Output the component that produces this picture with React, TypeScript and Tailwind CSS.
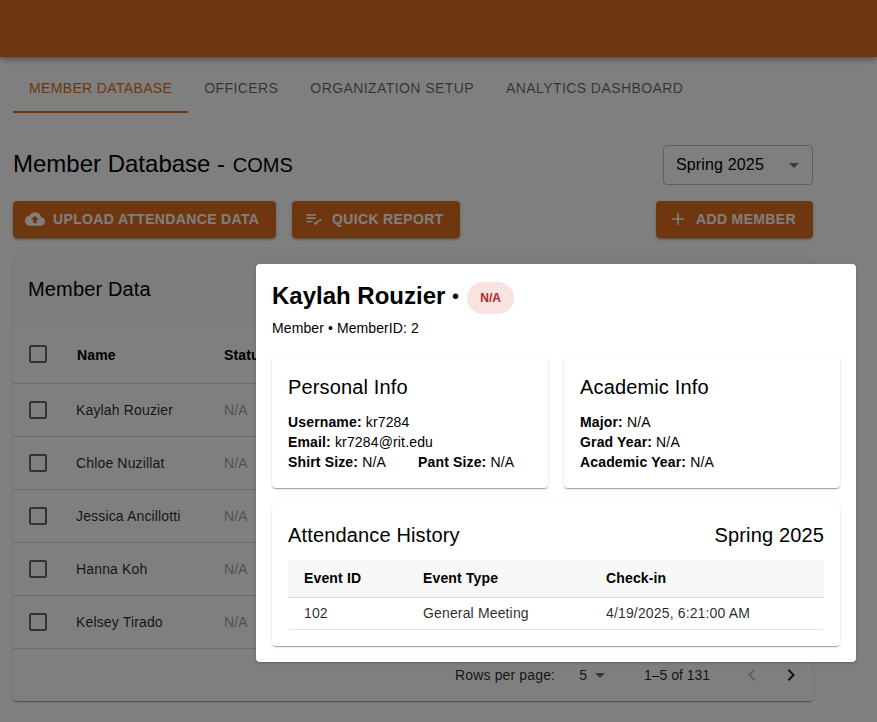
const members = ['Kaylah Rouzier', 'Chloe Nuzillat', 'Jessica Ancillotti', 'Hanna Koh', 'Kelsey Tirado'];
const tabs = ['Officers', 'Organization Setup', 'Analytics Dashboard'];

function Icon({ d, className }: { d: string; className: string }) {
  return (
    <svg viewBox="0 0 24 24" fill="currentColor" className={className}>
      <path d={d} />
    </svg>
  );
}

const checkbox = 'M19 5v14H5V5h14m0-2H5c-1.1 0-2 .9-2 2v14c0 1.1.9 2 2 2h14c1.1 0 2-.9 2-2V5c0-1.1-.9-2-2-2z';
const dropdown = 'M7 10l5 5 5-5z';
const btn =
  'flex h-[37px] items-center rounded bg-[#de6e20] pb-px pl-4 text-sm font-bold uppercase tracking-[0.35px] text-white shadow-[0_3px_1px_-2px_rgba(0,0,0,0.2),0_2px_2px_0_rgba(0,0,0,0.14),0_1px_5px_0_rgba(0,0,0,0.12)]';
const card = 'rounded bg-white shadow-[0_2px_1px_-1px_rgba(0,0,0,0.2),0_1px_1px_0_rgba(0,0,0,0.14),0_1px_3px_0_rgba(0,0,0,0.12)]';

function Field({ label, value }: { label: string; value: string }) {
  return (
    <span>
      <b className="font-bold">{label}:</b> {value}
    </span>
  );
}

export default function App() {
  return (
    <div className="relative h-[722px] overflow-hidden bg-white font-['Liberation_Sans',sans-serif] text-black">
      <div className="h-[57px] bg-[#de6e20] shadow-[0_2px_4px_-1px_rgba(0,0,0,0.2),0_4px_5px_0_rgba(0,0,0,0.14),0_1px_10px_0_rgba(0,0,0,0.12)]" />

      <nav className="ml-[13px] mt-[7px] flex h-[49px] text-sm uppercase tracking-[0.42px] text-black/60">
        <div className="flex items-center border-b-2 border-[#de6e20] px-4 pt-px tracking-[0.35px] text-[#de6e20]">Member Database</div>
        {tabs.map((t) => (
          <div key={t} className="flex items-center px-4 pb-px">
            {t}
          </div>
        ))}
      </nav>

      <main className="ml-[13px] w-[800px]">
        <div className="mt-[32px] flex h-[40px] items-center justify-between">
          <div className="flex items-baseline pb-[3px]">
            <h1 className="text-2xl">Member Database -&nbsp;</h1>
            <span className="ml-px text-xl">COMS</span>
          </div>
          <div className="flex h-[40px] w-[150px] items-center justify-between rounded border border-black/25 pl-3 pr-[6px] text-base tracking-[0.15px]">
            Spring 2025
            <Icon d={dropdown} className="size-6 text-black/55" />
          </div>
        </div>

        <div className="mt-4 flex">
          <button className={`${btn} w-[263px]`}>
            <Icon
              d="M19.35 10.04C18.67 6.59 15.64 4 12 4 9.11 4 6.6 5.64 5.35 8.04 2.34 8.36 0 10.91 0 14c0 3.31 2.69 6 6 6h13c2.76 0 5-2.24 5-5 0-2.64-2.05-4.78-4.65-4.96zM14 13v4h-4v-4H7l5-5 5 5h-3z"
              className="-ml-1 mr-2 size-5"
            />
            Upload Attendance Data
          </button>
          <button className={`${btn} ml-4 w-[168px]`}>
            <Icon
              d="M3 10h11v2H3zm0-2h11V6H3zm0 8h7v-2H3zm15.01-3.13.71-.71c.39-.39 1.02-.39 1.41 0l.71.71c.39.39.39 1.02 0 1.41l-.71.71zm-.71.71L12 16.88V19h2.12l5.3-5.3z"
              className="-ml-1 mr-2 size-5"
            />
            Quick Report
          </button>
          <button className={`${btn} ml-auto w-[157px]`}>
            <Icon d="M19 13h-6v6h-2v-6H5v-2h6V5h2v6h6v2z" className="-ml-1 mr-2 size-5" />
            Add Member
          </button>
        </div>

        <section className={`${card} mt-4 h-[447px]`}>
          <h2 className="flex h-[71px] items-center rounded-t bg-black/[0.02] px-[15px] pb-[2px] text-xl tracking-[0.15px]">
            Member Data
          </h2>
          <div className="flex h-[59px] items-center border-b border-black/15 text-sm font-bold tracking-[0.15px]">
            <Icon d={checkbox} className="ml-[13px] size-6 shrink-0 text-black/60" />
            <span className="ml-[27px] mt-[2px] w-[147px]">Name</span>
            <span className="mt-[2px]">Status</span>
          </div>
          {members.map((m) => (
            <div key={m} className="flex h-[53px] items-center border-b border-black/15 text-sm tracking-[0.15px]">
              <Icon d={checkbox} className="ml-[13px] size-6 shrink-0 text-black/60" />
              <span className="ml-[26px] w-[148px] text-black/85">{m}</span>
              <span className="text-black/40">N/A</span>
            </div>
          ))}
          <div className="flex h-[52px] items-center pb-[1px] pl-[442px] text-sm text-black/85">
            <span className="tracking-[0.15px]">Rows per page:</span>
            <span className="ml-[24px]">5</span>
            <Icon d={dropdown} className="ml-px size-6 text-black/55" />
            <span className="ml-[32px]">1–5 of 131</span>
            <Icon d="M15.41 7.41 14 6l-6 6 6 6 1.41-1.41L10.83 12z" className="ml-[30px] size-6 text-black/25" />
            <Icon d="M10 6 8.59 7.41 13.17 12l-4.58 4.59L10 18l6-6z" className="ml-[15px] size-6 text-black/85" />
          </div>
        </section>
      </main>

      {/* Modal over the page */}
      <div className="absolute inset-0 bg-black/50" />
      <div className="absolute left-[256px] top-[264px] h-[398px] w-[600px] rounded bg-white p-4 shadow-[0_1px_3px_rgba(0,0,0,0.25)]">
        <div className="flex h-8 items-center text-2xl font-bold">
          Kaylah Rouzier&nbsp;
          <span className="text-xl font-normal">•</span>
          <span className="ml-[8px] mt-[4px] flex h-8 w-[47px] items-center justify-center rounded-full bg-[#f8e3e1] text-xs text-[#b3261e]">
            N/A
          </span>
        </div>
        <p className="mt-[6px] h-5 text-sm leading-5 tracking-[0.1px]">Member • MemberID: 2</p>

        <div className="mt-[18px] flex gap-4">
          <div className={`${card} h-[132px] flex-1 px-4 pt-[16px]`}>
            <h3 className="text-xl leading-[30px] tracking-[0.15px]">Personal Info</h3>
            <div className="mt-[10px] flex flex-col text-sm leading-5 tracking-[0.15px]">
              <Field label="Username" value="kr7284" />
              <Field label="Email" value="kr7284@rit.edu" />
              <div className="flex">
                <span className="w-[130px]">
                  <Field label="Shirt Size" value="N/A" />
                </span>
                <Field label="Pant Size" value="N/A" />
              </div>
            </div>
          </div>
          <div className={`${card} h-[132px] flex-1 px-4 pt-[16px]`}>
            <h3 className="text-xl leading-[30px] tracking-[0.15px]">Academic Info</h3>
            <div className="mt-[10px] flex flex-col text-sm leading-5 tracking-[0.15px]">
              <Field label="Major" value="N/A" />
              <Field label="Grad Year" value="N/A" />
              <Field label="Academic Year" value="N/A" />
            </div>
          </div>
        </div>

        <div className={`${card} mt-4 h-[142px] px-4 pt-4`}>
          <div className="flex h-[30px] items-center justify-between text-xl tracking-[0.15px]">
            <h3>Attendance History</h3>
            <span>Spring 2025</span>
          </div>
          <div className="mt-[10px] flex h-[37px] items-center rounded-t bg-[#f7f7f7] pb-[2px] text-sm font-bold tracking-[0.15px]">
            <span className="w-[135px] pl-4">Event ID</span>
            <span className="w-[183px]">Event Type</span>
            <span>Check-in</span>
          </div>
          <div className="flex h-[32px] items-center border-t border-[#e0e0e0] pb-[2px] text-sm tracking-[0.15px] text-black/85">
            <span className="w-[135px] pl-4">102</span>
            <span className="w-[183px]">General Meeting</span>
            <span>4/19/2025, 6:21:00 AM</span>
          </div>
          <div className="mx-[1px] border-t border-[#e0e0e0]" />
        </div>
      </div>
    </div>
  );
}
